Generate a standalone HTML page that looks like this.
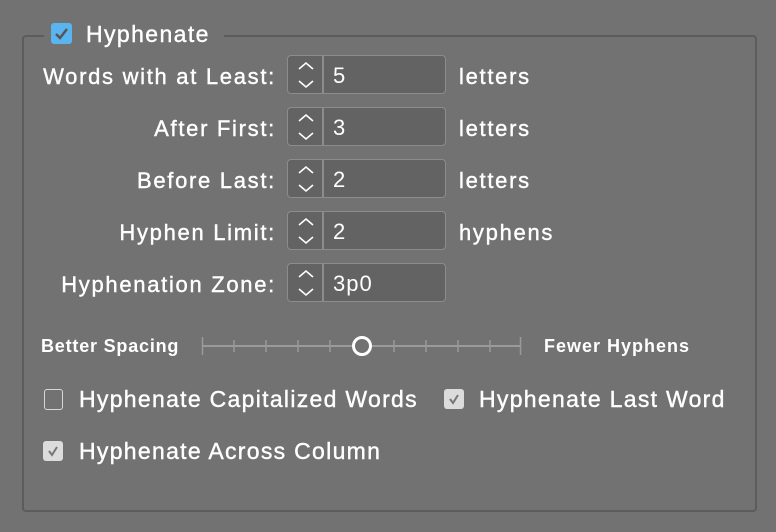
<!DOCTYPE html>
<html><head><style>
body{margin:0;width:776px;height:532px;background:#727272;font-family:"Liberation Sans",sans-serif;color:#fff;position:relative;overflow:hidden}
.fs{position:absolute;left:22px;top:35px;width:731px;height:473px;border:2px solid #5c5c5c;border-radius:4px}
.leg{position:absolute;left:44px;top:18px;background:#727272;padding:0 6px 0 6px;height:32px;width:168px}
.a{position:absolute;font-size:22px;white-space:nowrap;letter-spacing:1.7px;-webkit-text-stroke:0.4px #fff}
.lbl{position:absolute;right:500px;font-size:22px;white-space:nowrap;text-align:right;letter-spacing:1.7px;-webkit-text-stroke:0.4px #fff}
.in{position:absolute;left:287px;width:157px;height:37px;border:1.5px solid #8c8c8c;border-radius:4px;background:#636363}
.in .d{position:absolute;left:34px;top:0;bottom:0;width:1.5px;background:#8c8c8c}
.in .v{position:absolute;left:45px;top:7px;font-size:22px;letter-spacing:1px}
.in svg{position:absolute;left:8px;top:4px}
.cb{position:absolute;width:19px;height:19px;border-radius:3px}
.ck{font-size:23px;letter-spacing:1.3px}
.sm{font-size:18px;font-weight:bold;-webkit-text-stroke:0}
</style></head><body>
<div class="fs"></div>
<div class="leg"></div>
<div class="cb" style="left:51px;top:23px;background:#5ab4f0;width:21px;height:21px"><svg width="21" height="21"><path d="M5 11l4 4 7-9" stroke="#555" stroke-width="2.5" fill="none"/></svg></div>
<div class="a" style="left:86px;top:21px;font-size:23px;letter-spacing:1.4px">Hyphenate</div>

<div class="lbl" style="top:64px">Words with at Least:</div>
<div class="lbl" style="top:116px">After First:</div>
<div class="lbl" style="top:168px">Before Last:</div>
<div class="lbl" style="top:220px">Hyphen Limit:</div>
<div class="lbl" style="top:272px">Hyphenation Zone:</div>

<div class="in" style="top:55px"><svg width="20" height="30"><path d="M3 9l7-6 7 6M3 21l7 6 7-6" stroke="#fff" stroke-width="1.6" fill="none"/></svg><div class="d"></div><div class="v">5</div></div>
<div class="in" style="top:107px"><svg width="20" height="30"><path d="M3 9l7-6 7 6M3 21l7 6 7-6" stroke="#fff" stroke-width="1.6" fill="none"/></svg><div class="d"></div><div class="v">3</div></div>
<div class="in" style="top:159px"><svg width="20" height="30"><path d="M3 9l7-6 7 6M3 21l7 6 7-6" stroke="#fff" stroke-width="1.6" fill="none"/></svg><div class="d"></div><div class="v">2</div></div>
<div class="in" style="top:211px"><svg width="20" height="30"><path d="M3 9l7-6 7 6M3 21l7 6 7-6" stroke="#fff" stroke-width="1.6" fill="none"/></svg><div class="d"></div><div class="v">2</div></div>
<div class="in" style="top:263px"><svg width="20" height="30"><path d="M3 9l7-6 7 6M3 21l7 6 7-6" stroke="#fff" stroke-width="1.6" fill="none"/></svg><div class="d"></div><div class="v">3p0</div></div>

<div class="a" style="left:459px;top:64px">letters</div>
<div class="a" style="left:459px;top:116px">letters</div>
<div class="a" style="left:459px;top:168px">letters</div>
<div class="a" style="left:459px;top:220px">hyphens</div>

<div class="a sm" style="left:41px;top:336px;letter-spacing:0.8px">Better Spacing</div>
<div class="a sm" style="left:544px;top:336px;letter-spacing:1px">Fewer Hyphens</div>
<svg style="position:absolute;left:198px;top:334px" width="330" height="26">
<line x1="4" y1="12" x2="323" y2="12" stroke="#9a9a9a" stroke-width="2"/>
<g stroke="#9a9a9a" stroke-width="1.5">
<line x1="4.5" y1="3" x2="4.5" y2="21"/><line x1="36" y1="6" x2="36" y2="18"/><line x1="68" y1="6" x2="68" y2="18"/><line x1="100" y1="6" x2="100" y2="18"/><line x1="132" y1="6" x2="132" y2="18"/><line x1="196" y1="6" x2="196" y2="18"/><line x1="228" y1="6" x2="228" y2="18"/><line x1="260" y1="6" x2="260" y2="18"/><line x1="292" y1="6" x2="292" y2="18"/><line x1="322.5" y1="3" x2="322.5" y2="21"/></g>
<circle cx="164" cy="12" r="8.5" fill="#727272" stroke="#fff" stroke-width="3"/>
</svg>

<div class="cb" style="left:44px;top:389px;border:1.5px solid #d8d8d8;width:17px;height:19px"></div>
<div class="a ck" style="left:79px;top:386px">Hyphenate Capitalized Words</div>
<div class="cb" style="left:444px;top:389px;background:#dcdcdc;width:20px;height:20px"><svg width="20" height="20"><path d="M6 10l3 4 5-8" stroke="#777" stroke-width="2" fill="none"/></svg></div>
<div class="a ck" style="left:479px;top:386px">Hyphenate Last Word</div>
<div class="cb" style="left:43px;top:441px;background:#dcdcdc;width:20px;height:20px"><svg width="20" height="20"><path d="M6 10l3 4 5-8" stroke="#777" stroke-width="2" fill="none"/></svg></div>
<div class="a ck" style="left:79px;top:438px">Hyphenate Across Column</div>
</body></html>
